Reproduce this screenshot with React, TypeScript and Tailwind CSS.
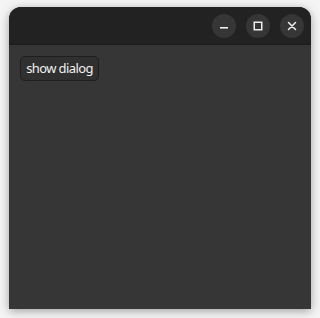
// ── Window controls ───────────────────────────────────────────────────────────

function ControlButton({ children }: { children: React.ReactNode }) {
  return (
    <button
      type="button"
      className="flex h-6 w-6 items-center justify-center rounded-full bg-[#363636] text-[#eeeeee]"
    >
      {children}
    </button>
  )
}

// ── Main component ────────────────────────────────────────────────────────────

export default function App() {
  return (
    <div
      className="h-[318px] w-[320px] bg-[#f4f4f4] pt-[7px] pl-[9px]"
      style={{ fontFamily: '"Noto Sans", "Open Sans", sans-serif' }}
    >
      <div className="flex h-[302px] w-[302px] flex-col overflow-hidden rounded-t-[12px] bg-[#363636] shadow-[0_2px_10px_rgba(0,0,0,0.35)]">
        {/* Title bar */}
        <div className="flex h-[38px] items-center justify-end gap-[10px] border-b border-[#1b1b1b] bg-[#222222] pr-[7px]">
          <ControlButton>
            <svg width="8" height="8" viewBox="0 0 8 8" className="mt-[4px]">
              <rect x="0" y="3" width="8" height="1.6" fill="currentColor" />
            </svg>
          </ControlButton>
          <ControlButton>
            <svg width="10" height="10" viewBox="0 0 10 10">
              <rect x="1.25" y="1.25" width="7.5" height="7.5" fill="none" stroke="currentColor" strokeWidth="1.5" />
            </svg>
          </ControlButton>
          <ControlButton>
            <svg width="10" height="10" viewBox="0 0 10 10">
              <path d="M1.5 1.5 L8.5 8.5 M8.5 1.5 L1.5 8.5" stroke="currentColor" strokeWidth="1.5" strokeLinecap="round" />
            </svg>
          </ControlButton>
        </div>

        {/* Content */}
        <div className="flex-1 px-[11px] pt-[10px]">
          <button
            type="button"
            className="h-[25px] w-[79px] rounded-[5px] border border-[#1f1f1f] bg-[#303030] text-[13px] leading-none tracking-[-0.6px] text-[#f0f0f0]"
          >
            show dialog
          </button>
        </div>
      </div>
    </div>
  )
}
